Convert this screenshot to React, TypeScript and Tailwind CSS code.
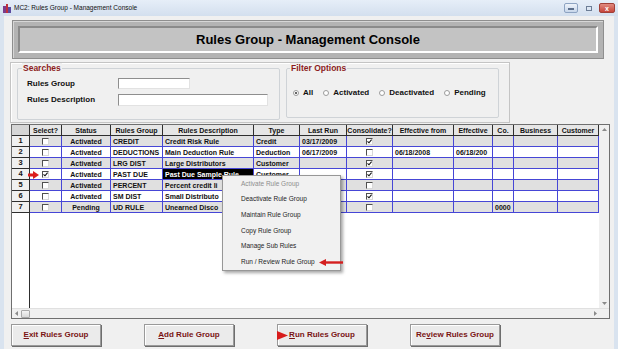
import React from 'react';

type Row = {
  n: number;
  sel: boolean;
  status: string;
  group: string;
  desc: string;
  type: string;
  lastRun: string;
  cons: boolean;
  effFrom: string;
  eff: string;
  co: string;
};

// rows 5-7 type values sit under the context menu, so they are left blank
const rows: Row[] = [
  { n: 1, sel: false, status: 'Activated', group: 'CREDIT', desc: 'Credit Risk Rule', type: 'Credit', lastRun: '03/17/2009', cons: true, effFrom: '', eff: '', co: '' },
  { n: 2, sel: false, status: 'Activated', group: 'DEDUCTIONS', desc: 'Main Deduction Rule', type: 'Deduction', lastRun: '06/17/2009', cons: false, effFrom: '06/18/2008', eff: '06/18/200', co: '' },
  { n: 3, sel: false, status: 'Activated', group: 'LRG DIST', desc: 'Large Distributors', type: 'Customer', lastRun: '', cons: true, effFrom: '', eff: '', co: '' },
  { n: 4, sel: true, status: 'Activated', group: 'PAST DUE', desc: 'Past Due Sample Rule', type: 'Customer', lastRun: '', cons: true, effFrom: '', eff: '', co: '' },
  { n: 5, sel: false, status: 'Activated', group: 'PERCENT', desc: 'Percent credit li', type: '', lastRun: '', cons: false, effFrom: '', eff: '', co: '' },
  { n: 6, sel: false, status: 'Activated', group: 'SM DIST', desc: 'Small Distributo', type: '', lastRun: '', cons: true, effFrom: '', eff: '', co: '' },
  { n: 7, sel: false, status: 'Pending', group: 'UD RULE', desc: 'Unearned Disco', type: '', lastRun: '', cons: false, effFrom: '', eff: '', co: '0000' },
];

const headers = ['', 'Select?', 'Status', 'Rules Group', 'Rules Description', 'Type', 'Last Run', 'Consolidate?', 'Effective from', 'Effective', 'Co.', 'Business', 'Customer'];

const menuItems = ['Activate Rule Group', 'Deactivate Rule Group', 'Maintain Rule Group', 'Copy Rule Group', 'Manage Sub Rules', 'Run / Review Rule Group'];

function Check({ on }: { on: boolean }) {
  return (
    <span className="w-[7px] h-[7px] border border-t-[#505050] border-l-[#505050] border-b-[#d8d8d8] border-r-[#d8d8d8] bg-white flex items-center justify-center">
      {on && (
        <svg width="5" height="5" viewBox="0 0 5 5">
          <path d="M0.5 2.3 L2 3.8 L4.6 0.6" stroke="#111" strokeWidth="1.1" fill="none" />
        </svg>
      )}
    </span>
  );
}

function Cell({ children, className = '' }: { children?: React.ReactNode; className?: string }) {
  return (
    <div className={`h-[11px] border-r border-b border-[#4646d6] flex items-center overflow-hidden whitespace-nowrap text-[7px] font-bold leading-none px-[2px] text-[#111] ${className}`}>
      {children}
    </div>
  );
}

function Radio({ on, label }: { on?: boolean; label: string }) {
  return (
    <div className="flex items-center">
      <span className="w-[6px] h-[6px] rounded-full border border-[#9c9c9c] bg-white mr-[4px] flex items-center justify-center">
        {on && <span className="w-[2px] h-[2px] rounded-full bg-[#333]" />}
      </span>
      <span className="text-[8px] font-bold text-[#111] leading-none">{label}</span>
    </div>
  );
}

function WinButton({ children, arrow }: { children: React.ReactNode; arrow?: boolean }) {
  return (
    <div className="relative w-[90px] h-[22px] bg-[#ebebeb] border border-[#9a9a9a] shadow-[inset_1px_1px_0_#ffffff,1px_1px_0_#6e6e6e] flex items-center justify-center text-[8px] font-bold text-[#7a1414]">
      {arrow && (
        <svg className="absolute left-[-1px] top-[6px]" width="11" height="9" viewBox="0 0 11 9">
          <polygon points="0,0 11,4.5 0,9" fill="#d81c1c" />
        </svg>
      )}
      {children}
    </div>
  );
}

export default function App() {
  return (
    <div className="w-[618px] h-[349px] overflow-hidden flex flex-col bg-[#d9e3ef] font-['Liberation_Sans',Arial,sans-serif]">
      {/* title bar */}
      <div className="h-[16px] flex items-center pl-[3px] pr-[3px] bg-gradient-to-b from-[#e6eef8] to-[#d3dfee]">
        <svg width="8" height="9" viewBox="0 0 8 9" className="mr-[3px]">
          <rect x="0" y="2" width="3" height="7" fill="#7a3c8c" />
          <rect x="3" y="0" width="2" height="9" fill="#c0303a" />
          <rect x="5" y="3" width="3" height="6" fill="#5a4aa0" />
        </svg>
        <span className="text-[6.5px] text-[#111] leading-none">MC2: Rules Group - Management Console</span>
        <div className="flex-1" />
        <div className="flex items-center gap-[5px]">
          <div className="w-[14px] h-[10px] rounded-[2px] border border-[#8da3c2] bg-gradient-to-b from-[#eef3fa] to-[#c7d6ea] flex items-end justify-center pb-[2px]">
            <span className="w-[6px] h-[2px] bg-[#5c6f8c]" />
          </div>
          <div className="w-[11px] h-[10px] flex items-center justify-center">
            <span className="w-[6px] h-[5px] border border-[#6c7d96]" />
          </div>
          <div className="w-[16px] h-[10px] rounded-[2px] bg-gradient-to-b from-[#e08a80] to-[#c6443a] border border-[#a04038] flex items-center justify-center text-white text-[7px] font-bold leading-none">x</div>
        </div>
      </div>

      {/* body */}
      <div className="flex-1 mx-[4px] bg-[#f0f0f0] flex flex-col">
        {/* header banner */}
        <div className="mt-[4px] ml-[8px] w-[592px] h-[39px] bg-[#b3b3b3] border border-[#8e8e8e] shadow-[inset_1px_1px_0_#d6d6d6] p-[5px]">
          <div className="h-full bg-[#c3c3c3] border-t-2 border-l-2 border-t-[#8a8a8a] border-l-[#8a8a8a] border-b-2 border-r-2 border-b-white border-r-white flex items-center justify-center">
            <span className="text-[13px] font-bold text-black leading-none">Rules Group - Management Console</span>
          </div>
        </div>

        {/* search / filter panel */}
        <div className="mt-[3px] ml-[6px] w-[500px] h-[61px] border border-[#c4c4c4] shadow-[inset_1px_1px_0_#ffffff] flex items-start pl-[6px]">
          <div className="relative mt-[5px] w-[263px] h-[52px] border border-[#cfd3d7] rounded-[2px] pl-[9px] pt-[9px] flex flex-col gap-[5px]">
            <span className="absolute left-[4px] top-[-6px] px-[1px] bg-[#f0f0f0] text-[8.5px] font-bold text-[#8c1c1c] leading-[11px]">Searches</span>
            <div className="flex items-center h-[11px]">
              <span className="w-[91px] text-[8px] font-bold text-[#111] leading-none">Rules Group</span>
              <div className="w-[72px] h-[11px] bg-white border border-t-[#8e8e8e] border-l-[#8e8e8e] border-b-[#e2e2e2] border-r-[#e2e2e2]" />
            </div>
            <div className="flex items-center h-[12px]">
              <span className="w-[91px] text-[8px] font-bold text-[#111] leading-none">Rules Description</span>
              <div className="w-[150px] h-[12px] bg-white border border-t-[#8e8e8e] border-l-[#8e8e8e] border-b-[#e2e2e2] border-r-[#e2e2e2]" />
            </div>
          </div>
          <div className="relative mt-[5px] ml-[6px] w-[213px] h-[50px] border border-[#cfd3d7] rounded-[2px] pl-[6px] flex items-center gap-[10px]">
            <span className="absolute left-[3px] top-[-6px] px-[1px] bg-[#f0f0f0] text-[8.5px] font-bold text-[#8c1c1c] leading-[11px]">Filter Options</span>
            <Radio on label="All" />
            <Radio label="Activated" />
            <Radio label="Deactivated" />
            <Radio label="Pending" />
          </div>
        </div>

        {/* grid */}
        <div className="relative mt-[1px] ml-[7px] w-[599px] h-[195px] border border-[#6f6f6f] bg-white flex flex-col">
          <div className="flex-1 flex">
            <div className="w-[587px] flex flex-col">
              <div className="grid grid-cols-[18px_32px_49px_52px_91px_46px_47px_46px_61px_39px_21px_44px_41px]">
                {headers.map((h, i) => (
                  <div key={i} className={`h-[11px] border-r border-b border-[#2e2e2e] flex items-center justify-center text-[7px] font-bold leading-none text-[#111] whitespace-nowrap overflow-hidden ${i === 0 ? 'bg-[#d6d6d6]' : 'bg-[#e6e6e6]'}`}>
                    {h}
                  </div>
                ))}
                {rows.map(r => {
                  const bg = r.n % 2 === 1 ? 'bg-[#e0e0e0]' : 'bg-white';
                  return (
                    <React.Fragment key={r.n}>
                      <div className="h-[11px] border-r border-b border-[#2e2e2e] bg-[#f0f0f0] flex items-center justify-center text-[7.5px] font-bold leading-none text-[#111]">{r.n}</div>
                      <Cell className={`${bg} justify-center`}><Check on={r.sel} /></Cell>
                      <Cell className={`${bg} justify-center`}>{r.status}</Cell>
                      <Cell className={bg}>{r.group}</Cell>
                      <Cell className={r.n === 4 ? 'bg-black !text-white' : bg}>{r.desc}</Cell>
                      <Cell className={bg}>{r.type}</Cell>
                      <Cell className={bg}>{r.lastRun}</Cell>
                      <Cell className={`${bg} justify-center`}><Check on={r.cons} /></Cell>
                      <Cell className={bg}>{r.effFrom}</Cell>
                      <Cell className={bg}>{r.eff}</Cell>
                      <Cell className={bg}>{r.co}</Cell>
                      <Cell className={bg} />
                      <Cell className={bg} />
                    </React.Fragment>
                  );
                })}
              </div>
              <div className="flex-1 flex">
                <div className="w-[18px] border-r border-[#2e2e2e]" />
              </div>
            </div>
            <div className="w-[10px] bg-[#f0f0f0] flex flex-col items-center justify-between py-[3px]">
              <svg width="5" height="3" viewBox="0 0 5 3"><polygon points="0,3 2.5,0 5,3" fill="#8a8a8a" /></svg>
              <svg width="5" height="3" viewBox="0 0 5 3"><polygon points="0,0 2.5,3 5,0" fill="#8a8a8a" /></svg>
            </div>
          </div>
          <div className="h-[10px] bg-[#f0f0f0] flex items-center pl-[3px] pr-[12px] border-t border-[#e0e0e0]">
            <svg width="3" height="5" viewBox="0 0 3 5"><polygon points="3,0 0,2.5 3,5" fill="#8a8a8a" /></svg>
            <div className="ml-[3px] w-[9px] h-[8px] rounded-[1px] border border-[#a8a8a8] bg-gradient-to-b from-[#f4f4f4] to-[#d8d8d8]" />
            <div className="flex-1" />
            <svg width="3" height="5" viewBox="0 0 3 5"><polygon points="0,0 3,2.5 0,5" fill="#8a8a8a" /></svg>
          </div>

          {/* current-row arrow */}
          <svg className="absolute left-[16px] top-[46px]" width="11" height="8" viewBox="0 0 11 8">
            <polygon points="0,2.5 5,2.5 5,0 11,4 5,8 5,5.5 0,5.5" fill="#dc1e1e" />
          </svg>

          {/* context menu */}
          <div className="absolute left-[210px] top-[50px] w-[119px] h-[96px] bg-[#f1f1f1] border border-[#979797] shadow-[2px_2px_3px_rgba(0,0,0,0.35)] flex flex-col">
            {menuItems.map((m, i) => (
              <div key={m} className={`h-[16px] flex items-center pl-[18px] text-[6.5px] leading-none whitespace-nowrap ${i === 0 ? 'text-[#8d8d8d]' : 'text-[#1e1e1e]'}`}>
                <span>{m}</span>
                {i === menuItems.length - 1 && (
                  <svg className="ml-[4px] shrink-0" width="24" height="7" viewBox="0 0 24 7">
                    <polygon points="0,3.5 7,0 7,7" fill="#d41e1e" />
                    <rect x="6" y="2.3" width="18" height="2.4" fill="#d41e1e" />
                  </svg>
                )}
              </div>
            ))}
          </div>
        </div>

        {/* buttons */}
        <div className="mt-[5px] ml-[7px] flex gap-[43px]">
          <WinButton><span><u>E</u>xit Rules Group</span></WinButton>
          <WinButton><span><u>A</u>dd Rule Group</span></WinButton>
          <WinButton arrow><span><u>R</u>un Rules Group</span></WinButton>
          <WinButton><span>Re<u>v</u>iew Rules Group</span></WinButton>
        </div>
      </div>
    </div>
  );
}
